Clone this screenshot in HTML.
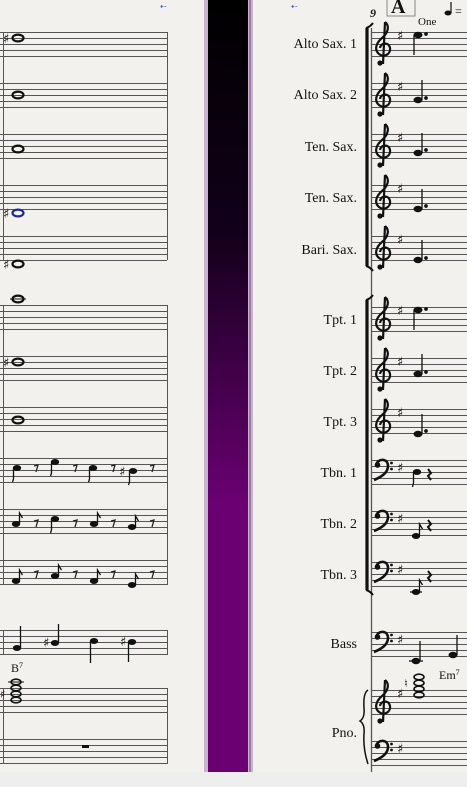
<!DOCTYPE html>
<html><head><meta charset="utf-8"><style>
html,body{margin:0;padding:0;width:467px;height:787px;overflow:hidden;background:#f2f0ed}
svg{display:block}
text{font-family:"Liberation Serif",serif;fill:#111}
.s{font-family:"DejaVu Sans",sans-serif;font-size:13px}
</style></head><body>
<svg width="467" height="787" viewBox="0 0 467 787" xmlns="http://www.w3.org/2000/svg">
<defs>
<linearGradient id="g" x1="0" y1="0" x2="0" y2="1">
<stop offset="0" stop-color="#000"/><stop offset="0.3" stop-color="#12001a"/><stop offset="0.65" stop-color="#6a0072"/><stop offset="1" stop-color="#6b0073"/>
</linearGradient>
<g id="tc" fill="none" stroke="#111">
<path d="M10,-10 C15,-6 13,1 7,6 C1,11 -1,18 4,22 C9,26 16,22 15,16 C14,10 6,10 5,16 M10,-10 L8,32" stroke-width="2.2"/>
<circle cx="5" cy="31" r="2.6" fill="#111" stroke="none"/>
</g>
<g id="bc">
<path d="M2,5 C4,-2 14,-2 14,6 C14,13 7,17 0,20" fill="none" stroke="#111" stroke-width="2.6"/>
<circle cx="3.5" cy="5" r="2.8" fill="#111"/><circle cx="17.5" cy="3" r="1.4" fill="#111"/><circle cx="17.5" cy="9" r="1.4" fill="#111"/>
</g>
</defs>
<rect x="0" y="0" width="467" height="772" fill="#f3f1ee"/>
<rect x="0" y="772" width="467" height="15" fill="#eeeeee"/>
<rect x="204" y="0" width="49" height="772" fill="#c8b4cc"/>
<rect x="208" y="0" width="40" height="772" fill="url(#g)"/>
<rect x="249" y="0" width="2" height="772" fill="#9a7aa3"/>

<g stroke="#555" stroke-width="1">
<path d="M0,32.5h167M0,38.5h167M0,44.5h167M0,50.5h167M0,56.5h167
M0,83.5h167M0,89.5h167M0,95.5h167M0,101.5h167M0,107.5h167
M0,134.5h167M0,140.5h167M0,146.5h167M0,152.5h167M0,158.5h167
M0,185.5h167M0,191.5h167M0,197.5h167M0,203.5h167M0,209.5h167
M0,236.5h167M0,242.5h167M0,248.5h167M0,254.5h167M0,260.5h167
M0,305.5h167M0,311.5h167M0,317.5h167M0,323.5h167M0,329.5h167
M0,356.5h167M0,362.5h167M0,368.5h167M0,374.5h167M0,380.5h167
M0,407.5h167M0,413.5h167M0,419.5h167M0,425.5h167M0,431.5h167
M0,458.5h167M0,464.5h167M0,470.5h167M0,476.5h167M0,482.5h167
M0,509.5h167M0,515.5h167M0,521.5h167M0,527.5h167M0,533.5h167
M0,560.5h167M0,566.5h167M0,572.5h167M0,578.5h167M0,584.5h167
M0,630.5h167M0,636.5h167M0,642.5h167M0,648.5h167M0,654.5h167
M0,688.5h167M0,694.5h167M0,700.5h167M0,706.5h167M0,712.5h167
M0,739.5h167M0,745.5h167M0,751.5h167M0,757.5h167M0,763.5h167"/>
<path d="M3.5,32v228M167.5,32v228M3.5,305v280M167.5,305v280M3.5,630v25M167.5,630v25M3.5,688v76M167.5,688v76"/>
</g>
<g fill="none" stroke="#111" stroke-width="2.2">
<ellipse cx="18" cy="38" rx="5.5" ry="3.4"/>
<ellipse cx="18" cy="95" rx="5.5" ry="3.4"/>
<ellipse cx="18" cy="149" rx="5.5" ry="3.4"/>
<ellipse cx="18" cy="213" rx="5.5" ry="3.4" stroke="#1a2a9a"/>
<ellipse cx="18" cy="264" rx="5.5" ry="3.4"/>
<ellipse cx="18" cy="299" rx="5.5" ry="3.4"/>
<ellipse cx="18" cy="362" rx="5.5" ry="3.4"/>
<ellipse cx="18" cy="420" rx="5.5" ry="3.4"/>
</g>
<path d="M10,299h16" stroke="#111"/>
<text class="s" x="3" y="43">♯</text>
<text class="s" x="3" y="218">♯</text>
<text class="s" x="3" y="269">♯</text>
<text class="s" x="3" y="367">♯</text>
<text class="s" x="119" y="476">♯</text>
<text class="s" x="43" y="647">♯</text>
<text class="s" x="120" y="646">♯</text>
<g fill="#111" stroke="#111" stroke-width="1.3">
<ellipse cx="17" cy="468" rx="4.2" ry="3" stroke="none"/><path d="M13.5,468v11l-1,3" fill="none"/>
<ellipse cx="55" cy="462" rx="4.2" ry="3" stroke="none"/><path d="M51.5,462v11l-1,3" fill="none"/>
<ellipse cx="93" cy="468" rx="4.2" ry="3" stroke="none"/><path d="M89.5,468v11l-1,3" fill="none"/>
<ellipse cx="133" cy="471" rx="4.2" ry="3" stroke="none"/><path d="M129.5,471v11l-1,3" fill="none"/>
<ellipse cx="16" cy="524" rx="4.2" ry="3" stroke="none"/><path d="M19.5,524v-11l3,5" fill="none"/>
<ellipse cx="55" cy="519" rx="4.2" ry="3" stroke="none"/><path d="M51.5,519v11l-1,3" fill="none"/>
<ellipse cx="94" cy="524" rx="4.2" ry="3" stroke="none"/><path d="M97.5,524v-11l3,5" fill="none"/>
<ellipse cx="132" cy="527" rx="4.2" ry="3" stroke="none"/><path d="M135.5,527v-11l3,5" fill="none"/>
<ellipse cx="16" cy="581" rx="4.2" ry="3" stroke="none"/><path d="M19.5,581v-11l3,5" fill="none"/>
<ellipse cx="55" cy="576" rx="4.2" ry="3" stroke="none"/><path d="M58.5,576v-11l3,5" fill="none"/>
<ellipse cx="94" cy="581" rx="4.2" ry="3" stroke="none"/><path d="M97.5,581v-11l3,5" fill="none"/>
<ellipse cx="132" cy="585" rx="4.2" ry="3" stroke="none"/><path d="M135.5,585v-11l3,5" fill="none"/>
<ellipse cx="17" cy="648" rx="4.2" ry="3" stroke="none"/><path d="M20.5,648v-22" fill="none"/>
<ellipse cx="55" cy="643" rx="4.2" ry="3" stroke="none"/><path d="M58.5,643v-19" fill="none"/>
<ellipse cx="94" cy="641" rx="4.2" ry="3" stroke="none"/><path d="M90.5,641v22" fill="none"/>
<ellipse cx="132" cy="642" rx="4.2" ry="3" stroke="none"/><path d="M128.5,642v20" fill="none"/>
<rect x="82" y="745" width="7" height="3" stroke="none"/>
</g>
<g stroke="#222" stroke-width="1.3" fill="none">
<path d="M34,466l4,-1l-2,7M73,466l4,-1l-2,7M111,466l4,-1l-2,7M150,466l4,-1l-2,7
M34,521l4,-1l-2,7M73,521l4,-1l-2,7M111,521l4,-1l-2,7M150,521l4,-1l-2,7
M34,572l4,-1l-2,7M73,572l4,-1l-2,7M111,572l4,-1l-2,7M150,572l4,-1l-2,7"/>
</g>
<text x="11" y="672" font-size="12">B<tspan font-size="8" dy="-4">7</tspan></text>
<g fill="none" stroke="#111" stroke-width="1.6">
<ellipse cx="16" cy="682" rx="5" ry="2.8"/><ellipse cx="16" cy="688" rx="5" ry="2.8"/><ellipse cx="16" cy="694" rx="5" ry="2.8"/><ellipse cx="16" cy="700" rx="5" ry="2.8"/>
</g>
<path d="M8,682h16" stroke="#111"/>
<text class="s" x="0" y="698" style="font-size:11px">♯</text>

<text x="160" y="9" font-size="8" style="fill:#3a4fb0">⇠</text>
<text x="291" y="9" font-size="8" style="fill:#3a4fb0">⇠</text>

<g stroke="#555" stroke-width="1">
<path d="M371,32.5h96M371,38.5h96M371,44.5h96M371,50.5h96M371,56.5h96
M371,83.5h96M371,89.5h96M371,95.5h96M371,101.5h96M371,107.5h96
M371,134.5h96M371,140.5h96M371,146.5h96M371,152.5h96M371,158.5h96
M371,185.5h96M371,191.5h96M371,197.5h96M371,203.5h96M371,209.5h96
M371,236.5h96M371,242.5h96M371,248.5h96M371,254.5h96M371,260.5h96
M371,307.5h96M371,313.5h96M371,319.5h96M371,325.5h96M371,331.5h96
M371,358.5h96M371,364.5h96M371,370.5h96M371,376.5h96M371,382.5h96
M371,409.5h96M371,415.5h96M371,421.5h96M371,427.5h96M371,433.5h96
M371,460.5h96M371,466.5h96M371,472.5h96M371,478.5h96M371,484.5h96
M371,511.5h96M371,517.5h96M371,523.5h96M371,529.5h96M371,535.5h96
M371,562.5h96M371,568.5h96M371,574.5h96M371,580.5h96M371,586.5h96
M371,632.5h96M371,638.5h96M371,644.5h96M371,650.5h96M371,656.5h96
M371,690.5h96M371,696.5h96M371,702.5h96M371,708.5h96M371,714.5h96
M371,741.5h96M371,747.5h96M371,753.5h96M371,759.5h96M371,765.5h96"/>
<path d="M371.5,28v744" stroke-width="1.3"/>
</g>
<g stroke="#111" fill="none">
<path d="M367,28v238M367,300v290" stroke-width="3.2"/>
<path d="M366,28q4,-1 7,-5M366,266q4,1 7,5M366,300q4,-1 7,-5M366,590q4,1 7,5" stroke-width="2"/>
<path d="M368,690 q-5,3 -4,18 q1,10 -4,13 q5,3 4,13 q-1,15 4,30" stroke-width="1.5"/>
</g>
<use href="#tc" x="375" y="32"/><use href="#tc" x="375" y="83"/><use href="#tc" x="375" y="134"/><use href="#tc" x="375" y="185"/><use href="#tc" x="375" y="236"/>
<use href="#tc" x="375" y="307"/><use href="#tc" x="375" y="358"/><use href="#tc" x="375" y="409"/>
<use href="#bc" x="374" y="460"/><use href="#bc" x="374" y="511"/><use href="#bc" x="374" y="562"/><use href="#bc" x="374" y="632"/>
<use href="#tc" x="375" y="690"/><use href="#bc" x="374" y="741"/>
<text class="s" x="397" y="40">♯</text><text class="s" x="397" y="91">♯</text><text class="s" x="397" y="142">♯</text><text class="s" x="397" y="193">♯</text><text class="s" x="397" y="244">♯</text>
<text class="s" x="397" y="315">♯</text><text class="s" x="397" y="366">♯</text><text class="s" x="397" y="417">♯</text>
<text class="s" x="397" y="472">♯</text><text class="s" x="397" y="523">♯</text><text class="s" x="397" y="574">♯</text><text class="s" x="397" y="644">♯</text>
<text class="s" x="397" y="698">♯</text><text class="s" x="397" y="753">♯</text>
<g fill="#111" stroke="#111" stroke-width="1.3">
<ellipse cx="418" cy="35" rx="4.5" ry="3.2" stroke="none"/><path d="M414,35v20" fill="none"/><circle cx="426" cy="34" r="1.2"/>
<ellipse cx="418" cy="100" rx="4.5" ry="3.2" stroke="none"/><path d="M422,100v-20" fill="none"/><circle cx="426" cy="98" r="1.2"/>
<ellipse cx="418" cy="153" rx="4.5" ry="3.2" stroke="none"/><path d="M422,153v-20" fill="none"/><circle cx="426" cy="150" r="1.2"/>
<ellipse cx="418" cy="209" rx="4.5" ry="3.2" stroke="none"/><path d="M422,209v-20" fill="none"/><circle cx="426" cy="206" r="1.2"/>
<ellipse cx="418" cy="260" rx="4.5" ry="3.2" stroke="none"/><path d="M422,260v-20" fill="none"/><circle cx="426" cy="258" r="1.2"/>
<ellipse cx="418" cy="310" rx="4.5" ry="3.2" stroke="none"/><path d="M414,310v20" fill="none"/><circle cx="426" cy="309" r="1.2"/>
<ellipse cx="418" cy="374" rx="4.5" ry="3.2" stroke="none"/><path d="M422,374v-20" fill="none"/><circle cx="426" cy="372" r="1.2"/>
<ellipse cx="418" cy="434" rx="4.5" ry="3.2" stroke="none"/><path d="M422,434v-20" fill="none"/><circle cx="426" cy="431" r="1.2"/>
<ellipse cx="417" cy="472" rx="4.2" ry="3" stroke="none"/><path d="M413.5,472v11l-1,4" fill="none"/>
<ellipse cx="416" cy="536" rx="4.2" ry="3" stroke="none"/><path d="M419.5,536v-12l3,5" fill="none"/>
<ellipse cx="416" cy="592" rx="4.2" ry="3" stroke="none"/><path d="M410,592h12M419.5,592v-12l3,5" fill="none"/>
<ellipse cx="416" cy="661" rx="4.5" ry="3.2" stroke="none"/><path d="M420,661v-20M409,661h14" fill="none"/>
<ellipse cx="453" cy="655" rx="4.5" ry="3.2" stroke="none"/><path d="M457,655v-20" fill="none"/>
<path d="M428,469l3,4l-3,3l3,4M428,520l3,4l-3,3l3,4M428,571l3,4l-3,3l3,4" fill="none" stroke-width="2"/>
</g>
<g fill="none" stroke="#111" stroke-width="1.6">
<ellipse cx="419" cy="677" rx="5" ry="2.8"/><ellipse cx="419" cy="683" rx="5" ry="2.8"/><ellipse cx="419" cy="689" rx="5" ry="2.8"/><ellipse cx="419" cy="695" rx="5" ry="2.8"/>
</g>
<text class="s" x="404" y="687" style="font-size:11px">♮</text>
<text x="439" y="679" font-size="12">Em<tspan font-size="8" dy="-4">7</tspan></text>
<text x="370" y="17" font-size="12" font-style="italic" font-weight="bold">9</text>
<rect x="387" y="-2" width="28" height="18" fill="none" stroke="#888"/>
<text x="391" y="13" font-size="20" font-weight="bold">A</text>
<text x="418" y="25" font-size="11">One</text>
<ellipse cx="448" cy="13" rx="3.5" ry="2.5" fill="#111"/><path d="M451,13v-11" stroke="#111" stroke-width="1.2"/>
<text x="455" y="15" font-size="12">=</text>
<g font-size="14" text-anchor="end">
<text x="357" y="48">Alto Sax. 1</text>
<text x="357" y="99">Alto Sax. 2</text>
<text x="357" y="151">Ten. Sax.</text>
<text x="357" y="202">Ten. Sax.</text>
<text x="357" y="254">Bari. Sax.</text>
<text x="357" y="324">Tpt. 1</text>
<text x="357" y="375">Tpt. 2</text>
<text x="357" y="426">Tpt. 3</text>
<text x="357" y="477">Tbn. 1</text>
<text x="357" y="528">Tbn. 2</text>
<text x="357" y="579">Tbn. 3</text>
<text x="357" y="648">Bass</text>
<text x="357" y="737">Pno.</text>
</g>
</svg>
</body></html>
